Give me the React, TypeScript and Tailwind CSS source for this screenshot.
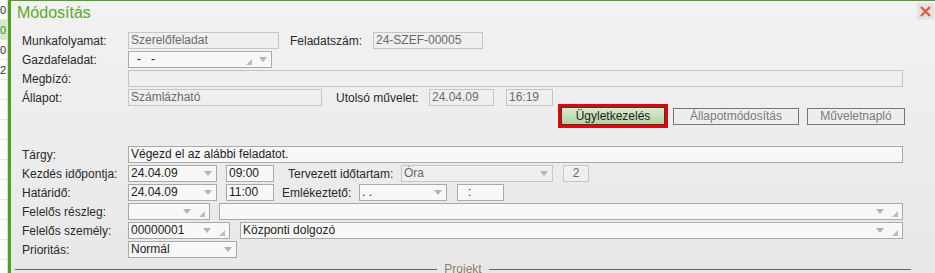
import React from "react";

function DownArrow() {
  return (
    <svg width="8" height="5" viewBox="0 0 8 5" className="shrink-0">
      <path d="M0 0h8L4 5z" fill="#b4b4b4" />
    </svg>
  );
}

function Grip() {
  return (
    <svg width="6" height="6" viewBox="0 0 6 6" className="shrink-0">
      <path d="M6 0v6H0z" fill="#bcbcbc" />
    </svg>
  );
}

function Field({ w, value, ro, className = "" }: { w?: string; value?: string; ro?: boolean; className?: string }) {
  return (
    <div
      className={`h-[17px] shrink-0 border px-[2px] leading-[15px] whitespace-nowrap overflow-hidden ${
        ro ? "border-[#c6c6c6] bg-[#efefef] text-[#6a6a6a]" : "border-[#a9a9a9] bg-[#f8f8f8] text-[#222]"
      } ${w ?? ""} ${className}`}
    >
      {value}
    </div>
  );
}

function Select({
  w,
  value,
  ro,
  grip,
  className = "",
}: {
  w?: string;
  value?: string;
  ro?: boolean;
  grip?: boolean;
  className?: string;
}) {
  return (
    <div
      className={`h-[17px] shrink-0 flex items-center border pl-[2px] pr-[4px] leading-[15px] whitespace-nowrap ${
        ro ? "border-[#c6c6c6] bg-[#efefef] text-[#6a6a6a]" : "border-[#a9a9a9] bg-[#f8f8f8] text-[#222]"
      } ${w ?? ""} ${className}`}
    >
      <span className="flex-1 overflow-hidden">{value}</span>
      <DownArrow />
      {grip && (
        <span className="ml-[8px] mt-[5px] flex">
          <Grip />
        </span>
      )}
    </div>
  );
}

function GripFirst({ w, value }: { w: string; value: string }) {
  // Gazdafeladat: grip before the arrow
  return (
    <div className={`h-[17px] shrink-0 flex items-center border border-[#a9a9a9] bg-[#f8f8f8] text-[#222] pl-[8px] pr-[4px] leading-[15px] ${w}`}>
      <span className="flex-1 whitespace-pre">{value}</span>
      <span className="mr-[7px] mt-[5px] flex">
        <Grip />
      </span>
      <DownArrow />
    </div>
  );
}

function Label({ children, className = "w-[106px]" }: { children: React.ReactNode; className?: string }) {
  return <div className={`shrink-0 whitespace-nowrap text-[#2a2a2a] ${className}`}>{children}</div>;
}

export default function App() {
  const bgRows = ["0", "0", "0", "2", "", "", "", "", "", "", "", "", "", ""];

  return (
    <div className="w-[935px] h-[273px] flex overflow-hidden font-['Liberation_Sans',Arial,sans-serif] text-[12px]">
      {/* window behind */}
      <div className="w-[8px] shrink-0 bg-white border-r border-[#dcdcdc] overflow-hidden">
        {bgRows.map((t, i) => (
          <div
            key={i}
            className={`h-[20px] leading-[20px] border-b border-[#e6e6e6] text-[11px] ${
              i === 1 ? "bg-[#d4ebc4] text-[#3f8f1c]" : "text-[#333]"
            }`}
          >
            {t}
          </div>
        ))}
      </div>

      {/* dialog */}
      <div className="flex-1 flex flex-col border-l-[3px] border-t border-[#4f9f22] bg-gradient-to-b from-[#f2f2f2] to-[#e8e8e8]">
        <div className="h-[31px] shrink-0 flex items-start justify-between pl-[6px] pr-[1px]">
          <div className="pt-[3px] text-[16px] leading-[18px] text-[#5ca82c]">Módosítás</div>
          <div className="mt-[2px] w-[17px] h-[17px] bg-[#e4e4e4] flex items-center justify-center">
            <svg width="11" height="11" viewBox="0 0 11 11">
              <path d="M1 1L10 10M10 1L1 10" stroke="#e05a3c" strokeWidth="2.4" />
            </svg>
          </div>
        </div>

        <div className="pl-[11px] pr-[32px]">
          <div className="flex items-center h-[17px]">
            <Label>Munkafolyamat:</Label>
            <Field w="w-[151px]" value="Szerelőfeladat" ro />
            <Label className="ml-[11px] w-[83px]">Feladatszám:</Label>
            <Field w="w-[110px]" value="24-SZEF-00005" ro />
          </div>

          <div className="flex items-center h-[17px] mt-[2px]">
            <Label>Gazdafeladat:</Label>
            <GripFirst w="w-[144px]" value={"-   -"} />
          </div>

          <div className="flex items-center h-[17px] mt-[2px]">
            <Label>Megbízó:</Label>
            <Field className="flex-1" ro />
          </div>

          <div className="flex items-center h-[17px] mt-[2px]">
            <Label>Állapot:</Label>
            <Field w="w-[194px]" value="Számlázható" ro />
            <Label className="ml-[14px] w-[93px]">Utolsó művelet:</Label>
            <Field w="w-[65px]" value="24.04.09" ro />
            <Field w="w-[47px]" className="ml-[12px]" value="16:19" ro />
          </div>

          <div className="flex items-center justify-end h-[24px] -mt-[2px] -mr-[2px]">
            <div className="border-[3px] border-[#e8000b] h-[24px] flex items-center">
              <div className="w-[104px] h-[18px] border border-[#3a3a3a] bg-gradient-to-b from-[#d9ecd0] to-[#b3d3a2] flex items-center justify-center text-[#222] leading-[16px]">
                Ügyletkezelés
              </div>
            </div>
            <div className="ml-[5px] w-[126px] h-[17px] border border-[#767676] flex items-center justify-center text-[#7a7a7a] leading-[15px]">
              Állapotmódosítás
            </div>
            <div className="ml-[8px] w-[98px] h-[17px] border border-[#767676] flex items-center justify-center text-[#7a7a7a] leading-[15px]">
              Műveletnapló
            </div>
          </div>
        </div>

        <div className="h-px bg-[#666] ml-[4px] mr-[24px] mt-[7px]" />

        <div className="pl-[11px] pr-[32px] mt-[11px]">
          <div className="flex items-center h-[17px]">
            <Label>Tárgy:</Label>
            <Field className="flex-1" value="Végezd el az alábbi feladatot." />
          </div>

          <div className="flex items-center h-[17px] mt-[2px]">
            <Label>Kezdés időpontja:</Label>
            <Select w="w-[89px]" value="24.04.09" />
            <Field w="w-[48px]" className="ml-[9px]" value="09:00" />
            <Label className="ml-[14px] w-[113px]">Tervezett időtartam:</Label>
            <Select w="w-[152px]" value="Óra" ro />
            <Field w="w-[26px]" className="ml-[10px] text-center" value="2" ro />
          </div>

          <div className="flex items-center h-[17px] mt-[2px]">
            <Label>Határidő:</Label>
            <Select w="w-[89px]" value="24.04.09" />
            <Field w="w-[48px]" className="ml-[9px]" value="11:00" />
            <Label className="ml-[8px] w-[77px]">Emlékeztető:</Label>
            <Select w="w-[88px]" value={" .  ."} />
            <Field w="w-[47px]" className="ml-[10px] pl-[10px]" value=":" />
          </div>

          <div className="flex items-center h-[17px] mt-[2px]">
            <Label>Felelős részleg:</Label>
            <Select w="w-[82px]" value="" grip />
            <Select className="flex-1 ml-[9px]" value="" grip />
          </div>

          <div className="flex items-center h-[17px] mt-[2px]">
            <Label>Felelős személy:</Label>
            <Select w="w-[102px]" value="00000001" grip />
            <Select className="flex-1 ml-[10px]" value="Központi dolgozó" grip />
          </div>

          <div className="flex items-center h-[17px] mt-[2px]">
            <Label>Prioritás:</Label>
            <Select w="w-[109px]" value="Normál" />
          </div>
        </div>

        <div className="flex items-center h-[14px] mt-[4px] ml-[4px] mr-[24px]">
          <div className="flex-1 h-px bg-[#666]" />
          <div className="px-[7px] text-[#8a7f6c] leading-[14px]">Projekt</div>
          <div className="flex-1 h-px bg-[#666]" />
        </div>
      </div>
    </div>
  );
}
